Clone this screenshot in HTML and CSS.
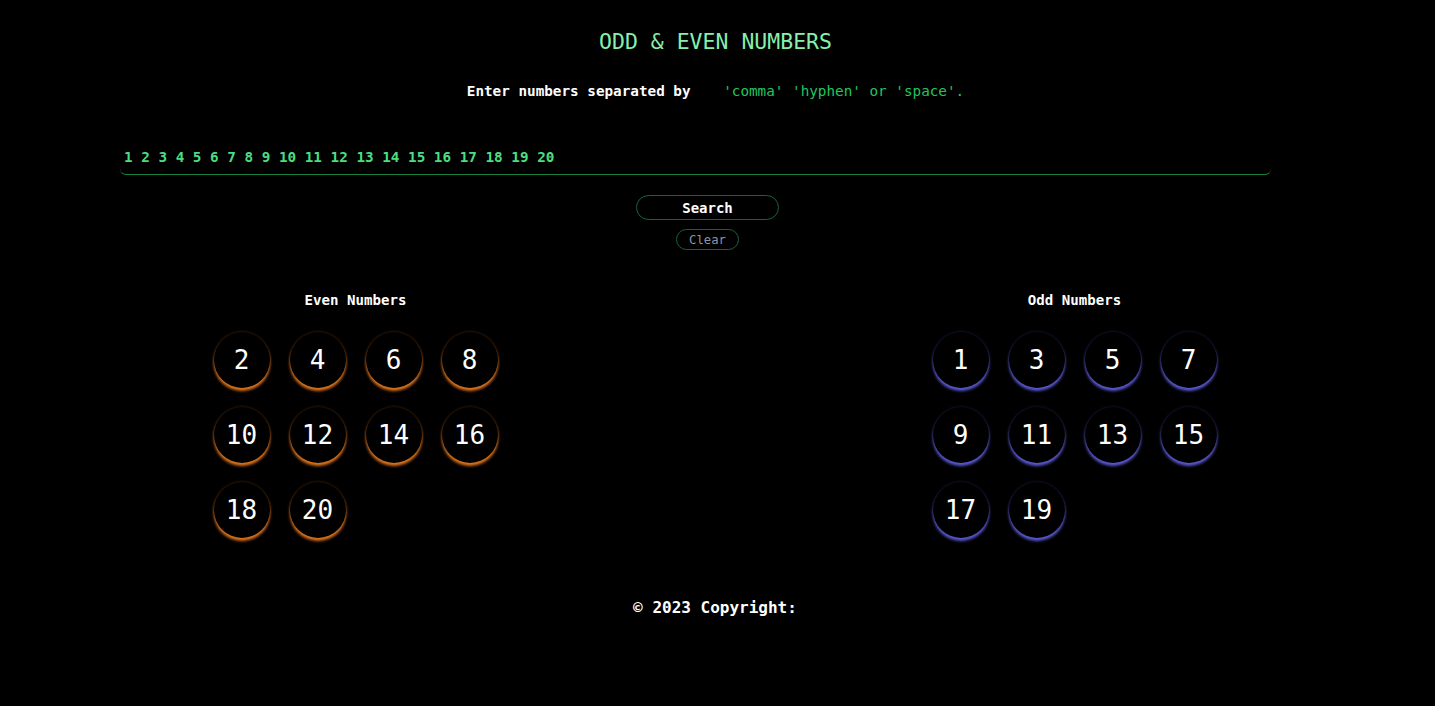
FILE: index.html
```html
<!DOCTYPE html>
<html lang="en">
<head>
<meta charset="utf-8">
<title>Odd &amp; Even Numbers</title>
<link rel="stylesheet" href="styles.css">
</head>
<body>
<main class="app">
  <h1 class="title">ODD &amp; EVEN NUMBERS</h1>
  <p class="hint">Enter numbers separated by <span class="hint-accent">'comma' 'hyphen' or 'space'.</span></p>
  <input class="numbers-input" type="text" value="1 2 3 4 5 6 7 8 9 10 11 12 13 14 15 16 17 18 19 20">
  <button class="btn btn-search" type="button">Search</button>
  <button class="btn btn-clear" type="button">Clear</button>

  <section class="results">
    <div class="group">
      <h2 class="group-title">Even Numbers</h2>
      <div class="grid">
        <span class="num num-even">2</span>
        <span class="num num-even">4</span>
        <span class="num num-even">6</span>
        <span class="num num-even">8</span>
        <span class="num num-even">10</span>
        <span class="num num-even">12</span>
        <span class="num num-even">14</span>
        <span class="num num-even">16</span>
        <span class="num num-even">18</span>
        <span class="num num-even">20</span>
      </div>
    </div>
    <div class="group">
      <h2 class="group-title">Odd Numbers</h2>
      <div class="grid">
        <span class="num num-odd">1</span>
        <span class="num num-odd">3</span>
        <span class="num num-odd">5</span>
        <span class="num num-odd">7</span>
        <span class="num num-odd">9</span>
        <span class="num num-odd">11</span>
        <span class="num num-odd">13</span>
        <span class="num num-odd">15</span>
        <span class="num num-odd">17</span>
        <span class="num num-odd">19</span>
      </div>
    </div>
  </section>

  <footer class="footer">© 2023 Copyright:</footer>
</main>
</body>
</html>
```

FILE: styles.css
```css
* { box-sizing: border-box; }

html, body {
  margin: 0;
  padding: 0;
  background: #000;
}

body {
  font-family: "DejaVu Sans Mono", "Liberation Mono", monospace;
  color: #fff;
  height: 706px;
  overflow: hidden;
}

.app {
  display: flex;
  flex-direction: column;
  align-items: center;
}

.title {
  margin: 29px 0 0 -4px;
  font-size: 21.5px;
  line-height: 26px;
  font-weight: normal;
  color: #86efac;
}

.hint {
  margin: 27px 0 0 -4px;
  font-size: 14.3px;
  line-height: 18px;
  font-weight: bold;
  color: #fff;
}

.hint-accent {
  margin-left: 24px;
  font-weight: normal;
  color: #22c55e;
}

.numbers-input {
  align-self: flex-start;
  margin: 40px 0 0 120px;
  width: 1151px;
  height: 35px;
  padding: 0 4px;
  background: transparent;
  border: none;
  border-bottom: 1px solid #15803d;
  border-radius: 0 0 6px 6px;
  font-family: "DejaVu Sans Mono", "Liberation Mono", monospace;
  font-size: 14.3px;
  font-weight: bold;
  color: #4ade80;
  outline: none;
}

.btn {
  background: transparent;
  border: 1px solid #166534;
  border-radius: 999px;
  font-family: "DejaVu Sans Mono", "Liberation Mono", monospace;
  padding: 0;
  cursor: pointer;
}

.btn-search {
  margin: 20px 0 0 -20px;
  width: 143px;
  height: 25px;
  font-size: 14px;
  font-weight: bold;
  color: #fff;
}

.btn-clear {
  margin: 9px 0 0 -20px;
  width: 63px;
  height: 21px;
  font-size: 12.3px;
  color: #8b95a7;
}

.results {
  align-self: flex-start;
  margin: 41px 0 0 -4px;
  display: grid;
  grid-template-columns: 719px 719px;
}

.group {
  display: flex;
  flex-direction: column;
  align-items: center;
}

.group-title {
  margin: 0;
  font-size: 14.1px;
  line-height: 18px;
  font-weight: bold;
  color: #fff;
}

.grid {
  margin-top: 23px;
  display: grid;
  grid-template-columns: repeat(4, 56px);
  column-gap: 20px;
  row-gap: 19px;
}

.num {
  width: 56px;
  height: 56px;
  border-radius: 50%;
  background: #000;
  display: flex;
  align-items: center;
  justify-content: center;
  font-size: 26px;
  color: #fff;
}

.num-even {
  box-shadow: 0 3px 3px #e2761b, 0 0 3px rgba(226, 118, 27, 0.35);
}

.num-odd {
  box-shadow: 0 3px 3px #5c5ad6, 0 0 3px rgba(92, 90, 214, 0.35);
}

.footer {
  margin: 60px 0 0 -5px;
  font-size: 16px;
  line-height: 20px;
  font-weight: bold;
  color: #fff;
}
```
